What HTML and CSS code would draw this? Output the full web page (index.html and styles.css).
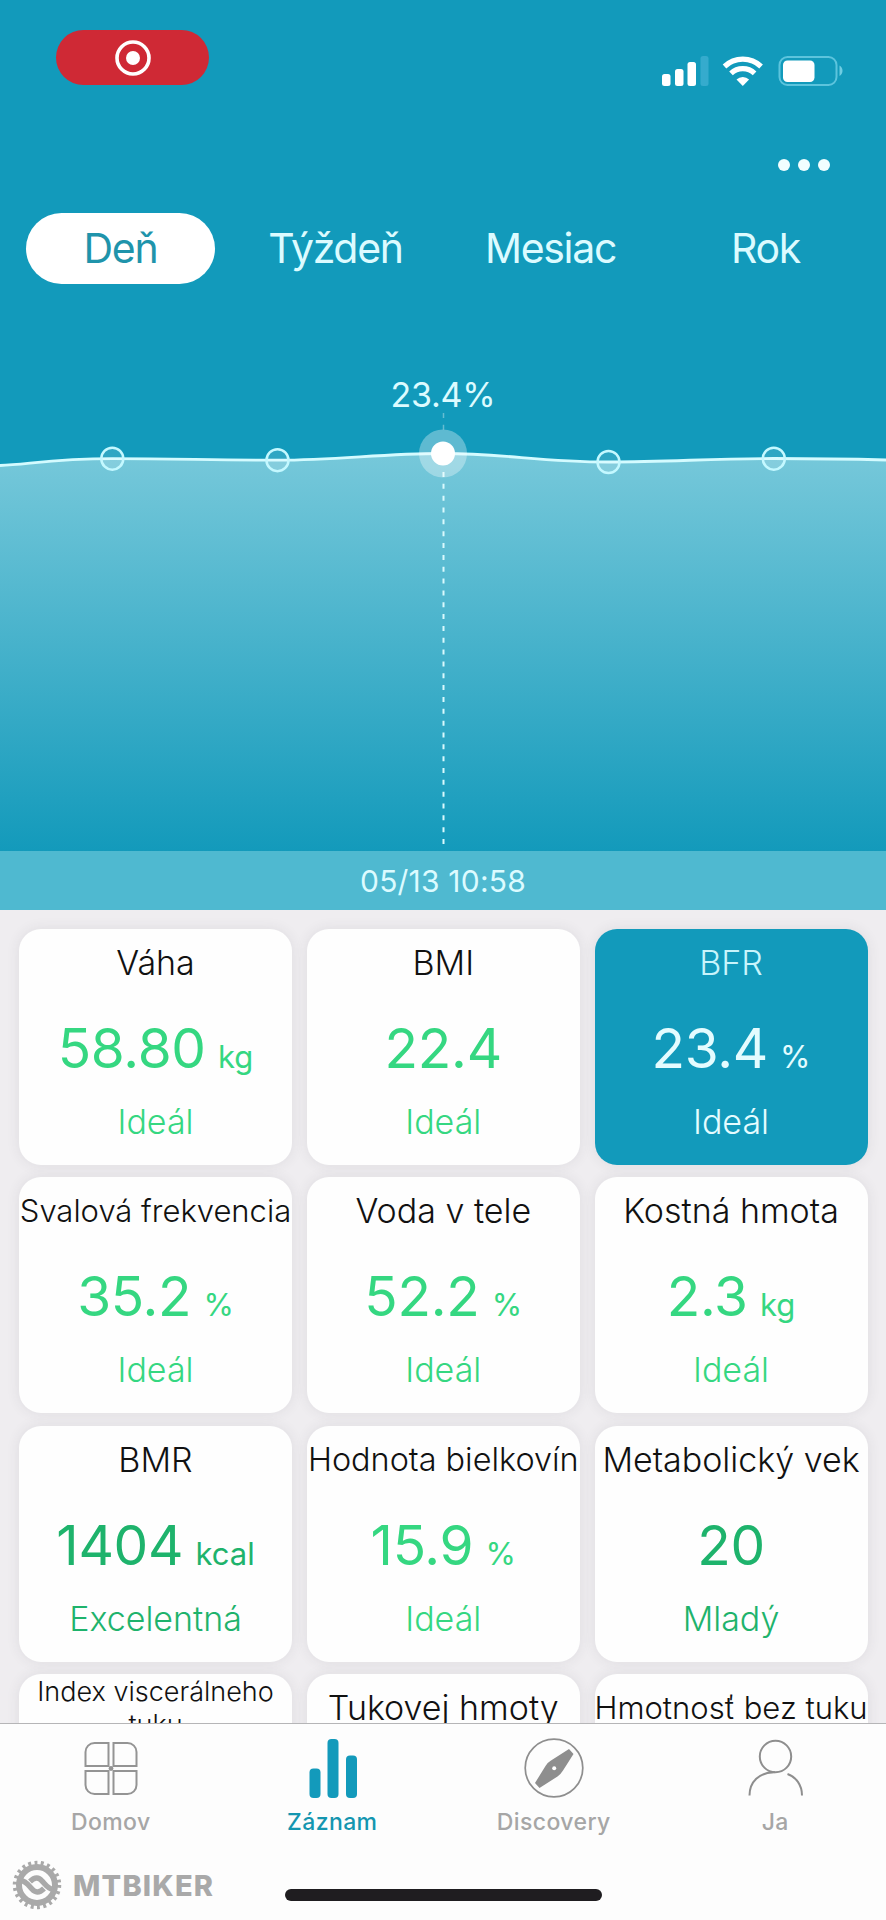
FILE: index.html
```html
<!DOCTYPE html>
<html lang="sk">
<head>
  <meta charset="UTF-8">
  <meta name="viewport" content="width=device-width, initial-scale=1">
  <title>Záznam</title>
  <link rel="stylesheet" href="styles.css">
</head>
<body>

<div class="app">
  <header class="header">
    <div class="status-bar">
      <div class="rec">
        <svg width="38" height="38" viewBox="0 0 38 38">
          <circle cx="19" cy="19" r="16" fill="none" stroke="#fff" stroke-width="3.6"/>
          <circle cx="19" cy="19" r="7" fill="#fff"/>
        </svg>
      </div>
      <svg class="status-icons" width="184" height="32" viewBox="0 0 184 32" fill="#fff">
        <rect x="1" y="19" width="8.5" height="12" rx="2.5"/>
        <rect x="14" y="14" width="8.5" height="17" rx="2.5"/>
        <rect x="26.5" y="7" width="8.5" height="24" rx="2.5"/>
        <rect x="39.5" y="1" width="8" height="30" rx="2.5" fill="#35abcd"/>
        <g fill="none" stroke="#fff" stroke-width="5.2">
          <path d="M63.5 11.5a26.5 26.5 0 0 1 36.6 0"/>
          <path d="M70 18.4a17 17 0 0 1 23.6 0"/>
        </g>
        <path d="M75.5 24.5a9 9 0 0 1 12.6 0l-6.3 6.5z"/>
        <rect x="118.5" y="2" width="57" height="28" rx="8" fill="none" stroke="#5cc4dd" stroke-width="2"/>
        <rect x="122" y="5.5" width="31.5" height="21.5" rx="4.5"/>
        <path d="M178.5 10.5c4 2 4 8.500 0 10.500z" fill="#6fcde2"/>
      </svg>
    </div>

    <div class="more">
      <span></span><span></span><span></span>
    </div>

    <nav class="periods">
      <a class="period active">Deň</a>
      <a class="period">Týždeň</a>
      <a class="period">Mesiac</a>
      <a class="period">Rok</a>
    </nav>

    <div class="chart">
      <svg width="886" height="491" viewBox="0 0 886 491">
        <defs>
          <linearGradient id="fill" x1="0" y1="95" x2="0" y2="491" gradientUnits="userSpaceOnUse">
            <stop offset="0" stop-color="#76c8da"/>
            <stop offset="1" stop-color="#139abb"/>
          </linearGradient>
        </defs>
        <path d="M0 105.5C30 104 55 98.7 112.5 98.7C180 98.7 210 100.2 277.5 100.2C340 100.2 380 93.5 443 93.5C505 93.5 540 102 608.5 102C670 102 710 98.5 773.5 98.5C815 98.5 850 99 886 100V491H0Z" fill="url(#fill)"/>
        <path d="M0 105.5C30 104 55 98.7 112.5 98.7C180 98.7 210 100.2 277.5 100.2C340 100.2 380 93.5 443 93.5C505 93.5 540 102 608.5 102C670 102 710 98.5 773.5 98.5C815 98.5 850 99 886 100" fill="none" stroke="#d4fbff" stroke-width="2.8"/>
        <line x1="443.5" y1="53" x2="443.5" y2="70" stroke="#fff" stroke-width="1.5" stroke-dasharray="5 6.8" opacity=".35"/>
        <line x1="443.5" y1="112" x2="443.5" y2="485" stroke="#d9f9fd" stroke-width="2" stroke-dasharray="5 6.84"/>
        <g fill="#fff" fill-opacity=".12" stroke="#c4f8ff" stroke-width="2.5">
          <circle cx="112.3" cy="98.7" r="11"/>
          <circle cx="277.5" cy="100.2" r="11"/>
          <circle cx="608.5" cy="102" r="11"/>
          <circle cx="773.8" cy="98.7" r="11"/>
        </g>
        <circle cx="443" cy="93.5" r="24" fill="#fff" fill-opacity=".32"/>
        <circle cx="443" cy="93.5" r="12" fill="#fff"/>
      </svg>
      <div class="chart-value">23.4%</div>
    </div>

    <div class="date">05/13 10:58</div>
  </header>

  <main class="cards">
    <div class="card">
      <div class="title">Váha</div>
      <div class="value">58.80 <small>kg</small></div>
      <div class="state">Ideál</div>
    </div>
    <div class="card">
      <div class="title">BMI</div>
      <div class="value">22.4</div>
      <div class="state">Ideál</div>
    </div>
    <div class="card selected">
      <div class="title">BFR</div>
      <div class="value">23.4 <small>%</small></div>
      <div class="state">Ideál</div>
    </div>
    <div class="card">
      <div class="title long">Svalová frekvencia</div>
      <div class="value">35.2 <small>%</small></div>
      <div class="state">Ideál</div>
    </div>
    <div class="card">
      <div class="title">Voda v tele</div>
      <div class="value">52.2 <small>%</small></div>
      <div class="state">Ideál</div>
    </div>
    <div class="card">
      <div class="title">Kostná hmota</div>
      <div class="value">2.3 <small>kg</small></div>
      <div class="state">Ideál</div>
    </div>
    <div class="card great">
      <div class="title">BMR</div>
      <div class="value">1404 <small>kcal</small></div>
      <div class="state">Excelentná</div>
    </div>
    <div class="card">
      <div class="title medium">Hodnota bielkovín</div>
      <div class="value">15.9 <small>%</small></div>
      <div class="state">Ideál</div>
    </div>
    <div class="card great">
      <div class="title">Metabolický vek</div>
      <div class="value">20</div>
      <div class="state">Mladý</div>
    </div>
    <div class="card">
      <div class="title two-lines">Index viscerálneho<br>tuku</div>
    </div>
    <div class="card">
      <div class="title">Tukovej hmoty</div>
    </div>
    <div class="card">
      <div class="title long">Hmotnosť bez tuku</div>
    </div>
  </main>

  <nav class="tabbar">
    <a class="tab">
      <svg width="60" height="60" viewBox="0 0 60 60" fill="none" stroke="#949494" stroke-width="2">
        <path d="M27.500 28H4.500V14a9 9 0 0 1 9-9H27.500Z"/>
        <path d="M32.500 28H55.500V14a9 9 0 0 0-9-9H32.500Z"/>
        <path d="M27.500 33H4.500V47a9 9 0 0 0 9 9H27.500Z"/>
        <path d="M32.500 33H55.500V47a9 9 0 0 1-9 9H32.500Z"/>
        <circle cx="30" cy="30.5" r="2.4" fill="#949494" stroke="none"/>
      </svg>
      <span>Domov</span>
    </a>
    <a class="tab active">
      <svg width="60" height="60" viewBox="0 0 60 60" fill="#139abb">
        <rect x="7.5" y="30.5" width="11" height="29.5" rx="4"/>
        <rect x="25.500" y="1" width="11" height="59" rx="4"/>
        <rect x="44" y="17.5" width="11" height="42.5" rx="4"/>
      </svg>
      <span>Záznam</span>
    </a>
    <a class="tab">
      <svg width="60" height="60" viewBox="0 0 60 60">
        <circle cx="30" cy="30" r="28.8" fill="none" stroke="#8e8e8e" stroke-width="1.7"/>
        <path d="M45 11L49.500 16L39 32.500Q36.500 36.500 33.500 38.500L15.500 50L11 45L21.500 28Q23.500 24.500 27 22.500Z" fill="#8e8e8e"/>
        <circle cx="30.2" cy="30.3" r="2" fill="#fff"/>
      </svg>
      <span>Discovery</span>
    </a>
    <a class="tab">
      <svg width="60" height="60" viewBox="0 0 60 60" fill="none" stroke="#8e8e8e" stroke-width="2">
        <circle cx="30.5" cy="18.5" r="15.7"/>
        <path d="M4.5 57.5C4.5 44 14 34 30 34.3"/>
        <path d="M42.5 36C51 39 57 47 57 57.5"/>
      </svg>
      <span>Ja</span>
    </a>
  </nav>

  <div class="home-indicator"></div>

  <div class="watermark">
    <svg width="50" height="50" viewBox="-25 -25 50 50">
      <circle r="22" fill="none" stroke="#a9a9a9" stroke-width="4.5" stroke-dasharray="2.9 3.383"/>
      <circle r="18" fill="none" stroke="#a9a9a9" stroke-width="6"/>
      <g fill="none" stroke="#a9a9a9" stroke-width="5.4">
        <path d="M-16 -4.500C-11 -4 -8 1 -5 4C-2 7.500 2 8.500 7 3.500"/>
        <path d="M16 4.500C11 4 8 -1 5 -4C2 -7.500 -2 -8.500 -7 -3.500"/>
      </g>
    </svg>
    <span>MTBIKER</span>
  </div>
</div>

</body>
</html>
```
FILE: styles.css
```css
* { box-sizing: border-box; }
body { margin: 0; font-family: Inter, "Noto Sans", sans-serif; background: #fdfdfd; }
.app {
  position: relative;
  display: flex;
  flex-direction: column;
  width: 886px;
  height: 1920px;
  overflow: hidden;
}

/* header */
.header { background: #129abb; color: #dcfbff; height: 910px; flex: none; }
.status-bar {
  display: flex;
  justify-content: space-between;
  align-items: flex-start;
  height: 159px;
  padding: 30px 41px 0 56px;
}
.rec {
  display: flex;
  align-items: center;
  justify-content: center;
  width: 153px;
  height: 55px;
  border-radius: 28px;
  background: #cf2935;
}
.status-icons { margin-top: 25px; }
.more {
  display: flex;
  justify-content: flex-end;
  gap: 8px;
  height: 54px;
  padding-right: 56px;
}
.more span { width: 12px; height: 12px; border-radius: 50%; background: #f2feff; }
.periods { display: flex; padding: 0 13px; height: 71px; }
.period {
  width: 189px;
  margin: 0 13px;
  border-radius: 36px;
  text-align: center;
  font-size: 41px;
  font-weight: 400;
  letter-spacing: -1.3px;
  line-height: 71px;
}
.period.active { background: #fff; color: #1f94ab; }

.chart { position: relative; height: 567px; padding-top: 76px; }
.chart svg { display: block; }
.chart-value {
  position: absolute;
  top: 90px;
  left: 0;
  width: 886px;
  text-align: center;
  font-size: 34px;
  font-weight: 400;
  letter-spacing: -.2px;
  line-height: 42px;
}
.date {
  height: 59px;
  background: #4fb9d0;
  text-align: center;
  font-size: 30px;
  font-weight: 400;
  letter-spacing: .2px;
  line-height: 60px;
}

/* cards */
.cards {
  flex: 1;
  display: grid;
  grid-template-columns: repeat(3, 273px);
  grid-auto-rows: 236px;
  justify-content: space-between;
  row-gap: 12.3px;
  padding: 19px 18.5px 0 19px;
  background: #efedf0;
  overflow: hidden;
}
.card {
  border-radius: 22px;
  background: #fefefe;
  box-shadow: 0 0 14px rgba(60, 50, 70, .09);
  color: #35d781;
  text-align: center;
  white-space: nowrap;
}
.card.great { color: #1eb36c; }
.title { color: #111; font-size: 34px; font-weight: 300; line-height: 68px; }
.title.medium { font-size: 32.4px; }
.title.long { font-size: 31px; }
.title.two-lines { font-size: 27px; line-height: 33px; padding-top: 1px; }
.value { height: 102px; font-size: 55px; font-weight: 400; line-height: 102px; letter-spacing: -.3px; }
.value small { margin-left: -3px; font-size: 31px; letter-spacing: 0; }
.state { font-size: 34px; font-weight: 300; line-height: 45px; }
.card.selected { background: #129abb; color: #e4fcff; }
.card.selected .title { color: #c8f4fb; }

/* bottom bar */
.tabbar {
  display: flex;
  height: 197px;
  flex: none;
  padding-top: 14px;
  border-top: 1px solid #b5b5b7;
  background: #fdfdfd;
}
.tab {
  flex: 1;
  display: flex;
  flex-direction: column;
  align-items: center;
  color: #a6a6a6;
  font-size: 23px;
  font-weight: 500;
  letter-spacing: .4px;
  line-height: 28px;
}
.tab span { margin-top: 10px; }
.tab.active { color: #1496b0; }
.home-indicator {
  position: absolute;
  left: 285px;
  bottom: 19px;
  width: 317px;
  height: 12px;
  border-radius: 6px;
  background: #1f1d20;
}
.watermark {
  position: absolute;
  left: 12px;
  top: 1860px;
  display: flex;
  align-items: center;
  gap: 11px;
  color: #a9a9a9;
  font-size: 29px;
  font-weight: 800;
  letter-spacing: 1.2px;
}
```
